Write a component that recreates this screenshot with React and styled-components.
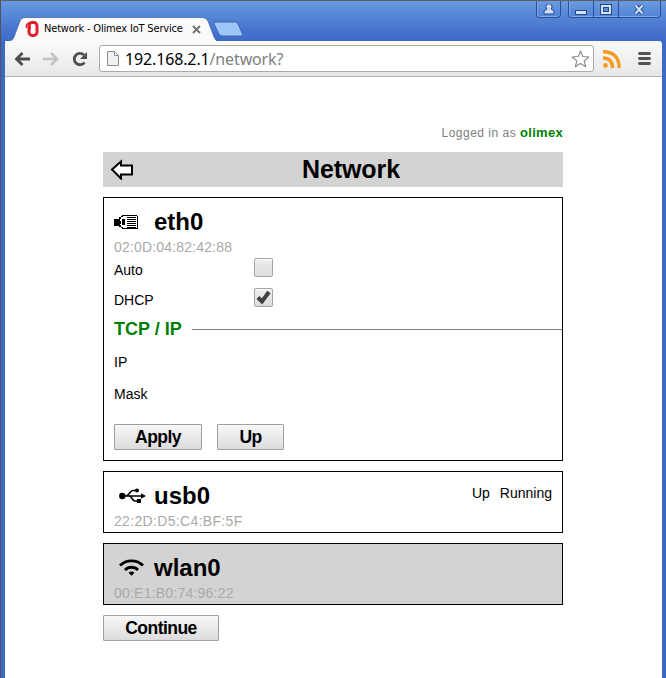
import React from "react";
import styled, { createGlobalStyle } from "styled-components";

const GlobalStyle = createGlobalStyle`
  * { box-sizing: border-box; }
  body { margin: 0; overflow: hidden; background: #fff; }
  svg { display: block; flex: none; }
`;

const BrowserWindow = styled.div`
  width: 666px;
  height: 678px;
  display: flex;
  flex-direction: column;
  padding: 0 4px 0 4px;
  border-top: 1px solid #5c5e62;
  border-left: 1px solid #50555e;
  background: linear-gradient(#6a9be0 0, #5b8cda 10px, #4573cc 30px, #3d69c6 42px, #3b68c4 100%);
  font-family: "Liberation Sans", Arial, sans-serif;
  color: #000;
`;

const TitleBar = styled.header`
  height: 40px;
  flex: none;
  display: flex;
  justify-content: space-between;
  align-items: flex-start;
`;

const TabStrip = styled.div`
  display: flex;
  height: 40px;
  padding-top: 16px;
`;

const Tab = styled.div`
  position: relative;
  width: 207px;
  height: 24px;
  display: flex;
  align-items: center;
  padding-left: 20px;
`;

const TabShape = styled.svg`
  position: absolute;
  left: 0;
  top: 0;
`;

const TabContent = styled.div`
  position: relative;
  display: flex;
  align-items: center;
  width: 100%;
`;

const TabTitle = styled.span`
  width: 148px;
  margin-left: 5px;
  font: 11px/14px "DejaVu Sans Condensed", "DejaVu Sans", sans-serif;
  font-stretch: condensed;
  letter-spacing: -0.18px;
  white-space: nowrap;
`;

const NewTab = styled.div`
  padding-top: 4px;
  margin-left: 0;
`;

const WindowControls = styled.div`
  display: flex;
  gap: 7px;
  margin-right: 1px;
`;

const ControlGroup = styled.div`
  display: flex;
  height: 17px;
  border: 1px solid #294f99;
  border-top: 0;
  border-radius: 0 0 4px 4px;
  box-shadow: inset 0 -1px 0 #7fa7e8, inset 1px 0 0 #7fa7e8;
`;

const Control = styled.div`
  width: ${(p) => p.$width}px;
  display: flex;
  align-items: center;
  justify-content: center;
  & + & { border-left: 1px solid #294f99; }
`;

const Toolbar = styled.nav`
  height: 36px;
  flex: none;
  display: flex;
  align-items: center;
  background: linear-gradient(#fafafa, #e7e7e7);
  border-bottom: 1px solid #aeaeae;
  border-radius: 3px 3px 0 0;
  padding: 0 9px 0 9px;
`;

const NavIcons = styled.div`
  display: flex;
  width: 85px;
  gap: 12px;
`;

const AddressBar = styled.div`
  width: 495px;
  height: 27px;
  display: flex;
  align-items: center;
  padding: 0 3px 0 7px;
  border: 1px solid #aaa;
  border-radius: 3px;
  background: #fff;
`;

const Address = styled.div`
  flex: 1;
  margin-left: 6px;
  font: 16px/22px "Noto Sans", sans-serif;
  letter-spacing: -0.14px;
  span { color: #808080; }
`;

const ToolbarActions = styled.div`
  display: flex;
  align-items: center;
  gap: 17px;
  margin-left: 9px;
`;

const Page = styled.main`
  flex: 1;
  background: #fff;
  padding: 47px 99px 0 98px;
`;

const Account = styled.div`
  height: 28px;
  text-align: right;
  font-size: 12px;
  line-height: 17px;
  letter-spacing: 0.5px;
  color: #808080;
  b { color: #008000; font-size: 13px; letter-spacing: 0.3px; }
`;

const PageHeader = styled.div`
  height: 35px;
  display: flex;
  align-items: center;
  padding-left: 7px;
  background: #d3d3d3;
`;

const PageTitle = styled.h1`
  flex: 1;
  margin: 0 26px 0 0;
  text-align: center;
  font-size: 25px;
  line-height: 35px;
  padding-left: 31px;
  letter-spacing: -0.1px;
`;

const Card = styled.section`
  height: ${(p) => p.$height}px;
  margin-top: 10px;
  padding: 8px 0 0 10px;
  border: 1px solid #000;
  background: ${(p) => (p.$inactive ? "#d3d3d3" : "#fff")};
`;

const InterfaceRow = styled.div`
  display: flex;
  align-items: center;
  height: 31px;
`;

const IconSlot = styled.div`
  width: 40px;
  padding-left: ${(p) => p.$inset || 0}px;
`;

const InterfaceName = styled.h2`
  flex: 1;
  margin: 0;
  font-size: 24px;
  line-height: 31px;
`;

const Status = styled.div`
  display: flex;
  gap: 10px;
  padding: 0 10px 6px 0;
  font-size: 14px;
`;

const MacAddress = styled.div`
  height: 18px;
  padding-top: 1px;
  font-size: 14px;
  line-height: 18px;
  letter-spacing: ${(p) => p.$spacing || 0.22}px;
  color: #a9a9a9;
`;

const Field = styled.div`
  display: flex;
  align-items: center;
  height: ${(p) => p.$height}px;
  font-size: 14px;
`;

const Label = styled.label`
  width: 140px;
  padding-top: 5px;
`;

const Checkbox = styled.span`
  width: 19px;
  height: 19px;
  display: flex;
  align-items: center;
  justify-content: center;
  border: 1px solid #a4a4a4;
  border-radius: 2px;
  background: linear-gradient(#eee, #dcdcdc);
  box-shadow: inset 0 1px 1px #fff;
`;

const SectionTitle = styled.h3`
  height: 24px;
  display: flex;
  align-items: center;
  gap: 10px;
  margin: 2px 0 2px;
  font-size: 18px;
  line-height: 24px;
  color: #008000;
  &::after { content: ""; flex: 1; height: 1px; background: #808080; }
`;

const ButtonRow = styled.div`
  display: flex;
  gap: 15px;
  margin-top: 17px;
`;

const Button = styled.button`
  width: ${(p) => p.$width}px;
  height: 26px;
  padding: 0;
  border: 1px solid #a0a0a0;
  border-radius: 1px;
  background: linear-gradient(#f7f7f7, #dcdcdc);
  color: #000;
  font: bold 17.5px/24px "Liberation Sans", Arial, sans-serif;
  letter-spacing: -0.55px;
`;

const Footer = styled.div`
  padding-top: 10px;
`;

function EthernetIcon() {
  return (
    <svg width="25" height="16" shapeRendering="crispEdges">
      <path d="M0 5h5v7H0zM5 7h2v3H5z" />
      <path d="M5 5V3h2V2h1V1h9v1H9v1H7v2H6v6h1v2h2v1h8v1H8v-1H7v-1H5z" />
      <path d="M8 5h3v6H8zM13 3h9v1h-9zM13 5h9v1h-9zM13 7h9v1h-9zM13 9h9v1h-9zM13 11h9v1h-9zM13 13h9v1h-9zM23 2h1v13h-1zM15 1h8v1h-8zM15 14h8v1h-8z" />
    </svg>
  );
}

function UsbIcon() {
  return (
    <svg width="27" height="16" fill="none" stroke="#000" strokeWidth="1.6">
      <circle cx="3.3" cy="8" r="3.2" fill="#000" stroke="none" />
      <path d="M4 8h19M7 8c3 0 4-5.5 7-5.5h3M10 8c3 0 3 5 6 5h3" />
      <circle cx="18" cy="2.6" r="2" fill="#000" stroke="none" />
      <path d="M18 11h4v4h-4zM22 5.2 27 8l-5 2.8z" fill="#000" stroke="none" />
    </svg>
  );
}

function WifiIcon() {
  return (
    <svg width="25" height="17" fill="none" stroke="#000">
      <path d="M1 6.5C7 .2 18 .2 24 6.5" strokeWidth="2.8" />
      <path d="M6 11c3.6-3.7 9.4-3.7 13 0" strokeWidth="2.8" />
      <path d="M9.5 13.8q3-2.5 6 0l-3 2.9z" fill="#000" stroke="none" />
    </svg>
  );
}

function BrowserChrome() {
  return (
    <>
      <TitleBar>
        <TabStrip>
          <Tab>
            <TabShape width="214" height="25">
              <path d="M0 24.5C6 24 8 23 9 20L15 4Q16 .5 20 .5H197Q201 .5 203 4l6 16q1.5 4 5 4.5z" fill="#fafafa" stroke="#315bad" strokeWidth=".7" />
              <path d="M0 24h214v1H0z" fill="#fafafa" />
            </TabShape>
            <TabContent>
              <svg width="14" height="16" fill="none" stroke="#e0202c">
                <rect x="4" y="1.5" width="8" height="13" rx="3.2" strokeWidth="3" />
                <path d="M1.5 7V4.5Q2 2 6 1.5M5 5v4" strokeWidth="1.6" />
              </svg>
              <TabTitle>Network - Olimex IoT Service</TabTitle>
              <svg width="9" height="9" stroke="#727272" strokeWidth="1.8">
                <path d="m1 1 7 7M8 1 1 8" />
              </svg>
            </TabContent>
          </Tab>
          <NewTab>
            <svg width="34" height="17">
              <path d="M4 1h19q2 0 3 2l4.5 10q.8 2-1.5 2H10q-2 0-3-2L2 3q-1-2 2-2z" fill="#9dc5f8" stroke="#3b67b5" />
            </svg>
          </NewTab>
        </TabStrip>
        <WindowControls>
          <ControlGroup>
            <Control $width={23}>
              <svg width="12" height="11" fill="#cbdcf5" stroke="#254987">
                <path d="M4 5a3 3 0 1 1 4 0l3 2v3H1V7z" />
              </svg>
            </Control>
          </ControlGroup>
          <ControlGroup>
            <Control $width={24}>
              <svg width="13" height="11"><rect x=".5" y="6.5" width="11" height="4" fill="#d2e2f8" stroke="#254987" /></svg>
            </Control>
            <Control $width={25}>
              <svg width="13" height="11" fill="none">
                <rect x="2" y="2" width="8" height="7" stroke="#d2e2f8" strokeWidth="2" />
                <rect x=".5" y=".5" width="11" height="10" stroke="#254987" />
                <rect x="3.5" y="3.5" width="5" height="4" stroke="#254987" />
              </svg>
            </Control>
            <Control $width={42}>
              <svg width="13" height="11" fill="none">
                <path d="m2.5 1.5 7 8m0-8-7 8" stroke="#254987" strokeWidth="4" />
                <path d="m2.5 1.5 7 8m0-8-7 8" stroke="#d2e2f8" strokeWidth="2" />
              </svg>
            </Control>
          </ControlGroup>
        </WindowControls>
      </TitleBar>
      <Toolbar>
        <NavIcons>
          <svg width="17" height="16" fill="none" stroke="#4d4d4d" strokeWidth="2.8"><path d="M16 8H3M8.5 2 2.5 8l6 6" /></svg>
          <svg width="17" height="16" fill="none" stroke="#c2c2c2" strokeWidth="2.5"><path d="M0 8h14M8 2l6 6-6 6" /></svg>
          <svg width="17" height="16" fill="none" stroke="#4d4d4d"><path d="M12.5 11.5A5.7 5.7 0 1 1 12 4" strokeWidth="2.8" /><path d="M15 1v7H8z" fill="#4d4d4d" stroke="none" /></svg>
        </NavIcons>
        <AddressBar>
          <svg width="12" height="15" fill="#f1f1f1" stroke="#8c8c8c"><path d="M.5.5h7l4 4v10H.5zM7.5.5v4h4" /></svg>
          <Address>192.168.2.1<span>/network?</span></Address>
          <svg width="19" height="18" fill="#fff" stroke="#888" strokeWidth="1.1">
            <path d="m9.5 1 2.3 5.5 6 .5-4.6 3.8 1.5 6-5.2-3.3-5.2 3.3 1.5-6L1.2 7l6-.5z" strokeLinejoin="round" />
          </svg>
        </AddressBar>
        <ToolbarActions>
          <svg width="18" height="18" fill="none" stroke="#f39b22" strokeWidth="3.4">
            <circle cx="2.5" cy="15.5" r="2.4" fill="#f39b22" stroke="none" />
            <path d="M0 8q9.5 0 9.5 10M0 1.8Q16.2 1.8 16.2 18" />
          </svg>
          <svg width="13" height="13" stroke="#525252" strokeWidth="2.8" strokeLinecap="round"><path d="M1.5 1.5h10M1.5 6.5h10M1.5 11.5h10" /></svg>
        </ToolbarActions>
      </Toolbar>
    </>
  );
}

export default function App() {
  return (
    <>
      <GlobalStyle />
      <BrowserWindow>
        <BrowserChrome />
        <Page>
          <Account>Logged in as <b>olimex</b></Account>
          <PageHeader>
            <svg width="24" height="21" fill="#fff" stroke="#000" strokeWidth="2">
              <path d="M2 10.5 11 2.5v4h11v9H11v4z" />
            </svg>
            <PageTitle>Network</PageTitle>
          </PageHeader>
          <Card $height={264}>
            <InterfaceRow><IconSlot><EthernetIcon /></IconSlot><InterfaceName>eth0</InterfaceName></InterfaceRow>
            <MacAddress $spacing={0.17}>02:0D:04:82:42:88</MacAddress>
            <Field $height={24}><Label>Auto</Label><Checkbox /></Field>
            <Field $height={36}>
              <Label>DHCP</Label>
              <Checkbox><svg width="15" height="15" fill="none" stroke="#424242" strokeWidth="4"><path d="m2 7.5 4 4L13 2" /></svg></Checkbox>
            </Field>
            <SectionTitle>TCP / IP</SectionTitle>
            <Field $height={32}><Label>IP</Label></Field>
            <Field $height={32}><Label>Mask</Label></Field>
            <ButtonRow><Button $width={88}>Apply</Button><Button $width={67}>Up</Button></ButtonRow>
          </Card>
          <Card $height={62}>
            <InterfaceRow>
              <IconSlot $inset={5}><UsbIcon /></IconSlot>
              <InterfaceName>usb0</InterfaceName>
              <Status><span>Up</span><span>Running</span></Status>
            </InterfaceRow>
            <MacAddress $spacing={0.33}>22:2D:D5:C4:BF:5F</MacAddress>
          </Card>
          <Card $height={62} $inactive>
            <InterfaceRow><IconSlot $inset={5}><WifiIcon /></IconSlot><InterfaceName>wlan0</InterfaceName></InterfaceRow>
            <MacAddress>00:E1:B0:74:96:22</MacAddress>
          </Card>
          <Footer><Button $width={116}>Continue</Button></Footer>
        </Page>
      </BrowserWindow>
    </>
  );
}
